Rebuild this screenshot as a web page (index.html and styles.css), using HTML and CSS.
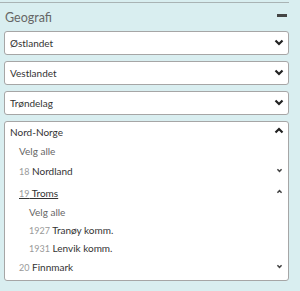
FILE: index.html
```html
<!DOCTYPE html>
<html>
<head>
<meta charset="utf-8">
<link rel="stylesheet" href="styles.css">
</head>
<body>
<div class="panel">
  <div class="rule"></div>
  <div class="head">
    <span class="title">Geografi</span>
    <span class="minus"></span>
  </div>
  <div class="list">
    <div class="box">
      <div class="row top"><span>Østlandet</span><span class="ic"><svg class="chev" viewBox="0 0 10 7"><polyline points="1.5,1.5 5,5 8.5,1.5"/></svg></span></div>
    </div>
    <div class="box">
      <div class="row top"><span>Vestlandet</span><span class="ic"><svg class="chev" viewBox="0 0 10 7"><polyline points="1.5,1.5 5,5 8.5,1.5"/></svg></span></div>
    </div>
    <div class="box">
      <div class="row top"><span>Trøndelag</span><span class="ic"><svg class="chev" viewBox="0 0 10 7"><polyline points="1.5,1.5 5,5 8.5,1.5"/></svg></span></div>
    </div>
    <div class="box open">
      <div class="row top"><span>Nord-Norge</span><span class="ic"><svg class="chev" viewBox="0 0 10 7"><polyline points="1.5,5.5 5,2 8.5,5.5"/></svg></span></div>
      <div class="row l1 all">Velg alle</div>
      <div class="row l1"><span><span class="num">18</span> Nordland</span><span class="ic"><svg class="chev small" viewBox="0 0 8 6"><polyline points="1.5,1.5 4,4 6.5,1.5"/></svg></span></div>
      <div class="row l1 tall"><span class="sel"><span class="num">19</span> Troms</span><span class="ic"><svg class="chev small" viewBox="0 0 8 6"><polyline points="1.5,4.5 4,2 6.5,4.5"/></svg></span></div>
      <div class="row l2 all">Velg alle</div>
      <div class="row l2"><span><span class="num">1927</span> Tranøy komm.</span></div>
      <div class="row l2"><span><span class="num">1931</span> Lenvik komm.</span></div>
      <div class="row l1"><span><span class="num">20</span> Finnmark</span><span class="ic"><svg class="chev small" viewBox="0 0 8 6"><polyline points="1.5,1.5 4,4 6.5,1.5"/></svg></span></div>
    </div>
  </div>
</div>
</body>
</html>
```
FILE: styles.css
```css
html, body {
  margin: 0;
  padding: 0;
  background: #d9eef0;
  font-family: Lato, "Noto Sans", sans-serif;
  color: #333;
}
.panel {
  width: 289px;
  padding-top: 2px;
}
.rule {
  height: 1px;
  background: #a9b3b4;
}
.head {
  display: flex;
  justify-content: space-between;
  align-items: center;
  height: 28px;
  padding: 0 0 0 5px;
}
.title {
  font-size: 12.5px;
  color: #666;
  padding-top: 1px;
}
.minus {
  width: 10px;
  height: 3px;
  background: #444;
  margin-right: 2px;
  margin-bottom: 3px;
}
.list {
  display: flex;
  flex-direction: column;
  gap: 6px;
  margin-left: 4px;
}
.box {
  background: #fff;
  border: 1px solid #a6a6a6;
  border-radius: 3px;
}
.row {
  display: flex;
  justify-content: space-between;
  align-items: center;
  font-size: 10px;
  color: #333;
}
.ic {
  width: 10px;
  display: flex;
  justify-content: center;
  margin-top: -2px;
}
.row.top {
  height: 22px;
  padding: 0 4px 0 5px;
}
.box.open .row.top {
  height: 19px;
}
.row.l1 {
  height: 20px;
  padding: 0 4px 0 14px;
}
.row.l1.tall {
  height: 22px;
  padding-top: 1px;
  box-sizing: border-box;
}
.row.l2 {
  height: 18px;
  padding: 0 4px 0 24px;
}
.row.all {
  color: #666;
}
.num {
  color: #999;
  font-size: 9px;
}
.sel {
  text-decoration: underline;
}
.chev {
  width: 10px;
  height: 7px;
  fill: none;
  stroke: #222;
  stroke-width: 2.2;
}
.chev.small {
  width: 7px;
  height: 5px;
  stroke-width: 1.8;
  stroke: #444;
}
.box.open {
  padding-bottom: 3px;
}
```
